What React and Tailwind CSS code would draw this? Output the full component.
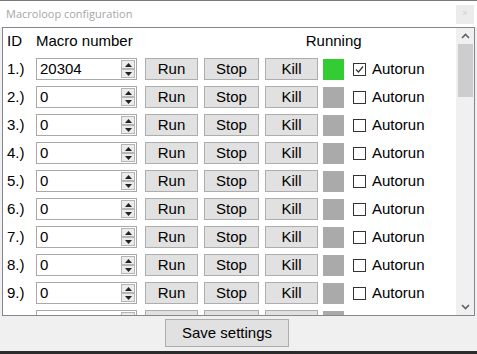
import React from "react";

const rows = [
  { id: "1.)", value: "20304", running: true, autorun: true },
  { id: "2.)", value: "0" },
  { id: "3.)", value: "0" },
  { id: "4.)", value: "0" },
  { id: "5.)", value: "0" },
  { id: "6.)", value: "0" },
  { id: "7.)", value: "0" },
  { id: "8.)", value: "0" },
  { id: "9.)", value: "0" },
  { id: "10.)", value: "0" },
];

const Spinner = () => (
  <div className="flex flex-col w-[14px] h-[18px] mr-[1px]">
    {["up", "down"].map((dir) => (
      <div
        key={dir}
        className="flex-1 border border-[#b5b5b5] bg-[#ececec] flex items-center justify-center"
      >
        <svg width="7" height="4" viewBox="0 0 7 4">
          {dir === "up" ? (
            <path d="M0 4 L3.5 0 L7 4 Z" fill="#222" />
          ) : (
            <path d="M0 0 L3.5 4 L7 0 Z" fill="#222" />
          )}
        </svg>
      </div>
    ))}
  </div>
);

const Checkbox = ({ checked }) => (
  <div className="w-[13px] h-[13px] border border-[#333] bg-white flex items-center justify-center">
    {checked && (
      <svg width="11" height="11" viewBox="0 0 11 11">
        <path d="M2 5.5 L4.5 8 L9 2.5" fill="none" stroke="#333" strokeWidth="1.2" />
      </svg>
    )}
  </div>
);

const Btn = ({ children, w }) => (
  <div
    className={`${w} h-[22px] border border-[#adadad] bg-[#e1e1e1] flex items-center justify-center`}
  >
    {children}
  </div>
);

const MacroRow = ({ row }) => (
  <div className="h-[28px] flex items-center shrink-0">
    <div className="w-[33px] pl-[4px]">{row.id}</div>
    <div className="w-[101px] h-[22px] border border-[#a9a9a9] flex items-center justify-between">
      <span className="pl-[3px]">{row.value}</span>
      <Spinner />
    </div>
    <div className="ml-[8px]">
      <Btn w="w-[53px]">Run</Btn>
    </div>
    <div className="ml-[6px]">
      <Btn w="w-[55px]">Stop</Btn>
    </div>
    <div className="ml-[6px]">
      <Btn w="w-[53px]">Kill</Btn>
    </div>
    <div
      className={`ml-[5px] w-[21px] h-[21px] ${
        row.running ? "bg-[#33cc33]" : "bg-[#aaaaaa]"
      }`}
    />
    <div className="ml-[9px]">
      <Checkbox checked={row.autorun} />
    </div>
    <span className="ml-[6px]">Autorun</span>
  </div>
);

const ScrollBar = () => (
  <div className="w-[18px] bg-[#f0f0f0] flex flex-col items-center">
    <div className="h-[16px] flex items-center justify-center">
      <svg width="9" height="6" viewBox="0 0 9 6">
        <path d="M1 5 L4.5 1.5 L8 5" fill="none" stroke="#606060" strokeWidth="1.6" />
      </svg>
    </div>
    <div className="w-[15px] h-[53px] bg-[#cdcdcd]" />
    <div className="flex-1" />
    <div className="h-[16px] flex items-center justify-center">
      <svg width="9" height="6" viewBox="0 0 9 6">
        <path d="M1 1 L4.5 4.5 L8 1" fill="none" stroke="#606060" strokeWidth="1.6" />
      </svg>
    </div>
  </div>
);

export default function App() {
  return (
    <div
      className="w-[477px] h-[354px] flex flex-col bg-[#f0f0f0] text-black text-[15px] overflow-hidden"
      style={{ fontFamily: '"Liberation Sans", Arial, sans-serif' }}
    >
      <div className="h-[27px] shrink-0 bg-white border-t border-[#7a7a7a] flex items-center justify-between pl-[6px] pr-[3px]">
        <span
          className="text-[11px] text-[#a6a6a6]"
          style={{ fontFamily: '"Open Sans", "Noto Sans", sans-serif' }}
        >
          Macroloop configuration
        </span>
        <div className="w-[18px] h-[19px] bg-[#ececec] flex items-center justify-center text-[9px] text-[#d0d0d0]">
          ×
        </div>
      </div>
      <div className="h-[289px] shrink-0 mx-[2px] border border-[#828790] bg-white flex">
        <div className="flex-1 overflow-hidden flex flex-col">
          <div className="h-[27px] shrink-0 flex items-center">
            <span className="w-[33px] pl-[4px]">ID</span>
            <span>Macro number</span>
            <span className="ml-[173px]">Running</span>
          </div>
          {rows.map((row) => (
            <MacroRow key={row.id} row={row} />
          ))}
        </div>
        <ScrollBar />
      </div>
      <div className="flex-1 flex items-start pt-[3px]">
        <div className="ml-[165px] w-[124px] h-[28px] border border-[#adadad] bg-[#e1e1e1] flex items-center justify-center">
          Save settings
        </div>
      </div>
      <div className="h-[3px] shrink-0 bg-[#2b2b2b]" />
    </div>
  );
}
